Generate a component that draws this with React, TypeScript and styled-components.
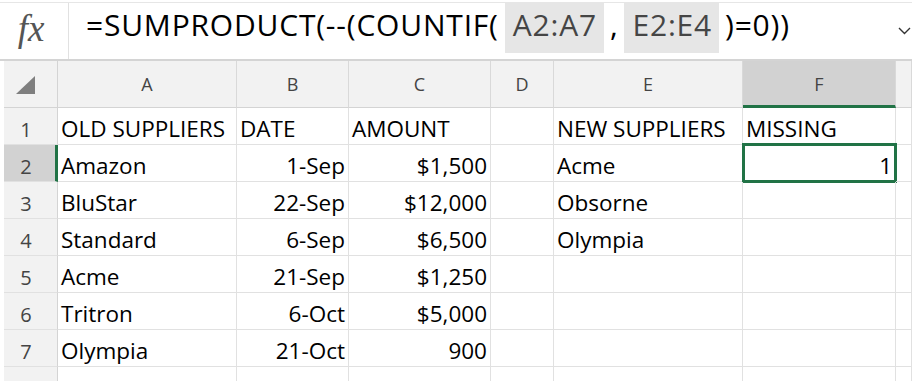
import React from "react";
import styled, { createGlobalStyle } from "styled-components";

const GlobalStyle = createGlobalStyle`
  html, body { margin: 0; padding: 0; background: #ffffff; }
  body { width: 912px; height: 381px; overflow: hidden; }
  * { box-sizing: border-box; }
`;

const Page = styled.div`
  width: 912px;
  height: 381px;
  overflow: hidden;
  background: #ffffff;
`;

const FormulaBar = styled.div`
  margin-top: 2px;
  height: 59px;
  border-top: 1px solid #e6e6e6;
  border-bottom: 2px solid #d4d4d4;
  display: flex;
  align-items: flex-start;
`;

const FxBox = styled.div`
  width: 69px;
  height: 100%;
  border-right: 1px solid #e1e1e1;
  display: flex;
  align-items: center;
  justify-content: center;
  padding-right: 6px;
  padding-bottom: 6px;
  font-family: "Liberation Serif", "DejaVu Serif", serif;
  font-style: italic;
  font-size: 37px;
  color: #555555;
  letter-spacing: 0px;
`;

const FormulaText = styled.div`
  padding-left: 17px;
  font-family: "Open Sans", "Noto Sans", sans-serif;
  font-size: 30px;
  line-height: 44px;
  letter-spacing: 0.8px;
  color: #000000;
  white-space: nowrap;
`;

const Ref = styled.span`
  display: inline-block;
  vertical-align: top;
  background: #e6e6e6;
  color: #454545;
  padding: 0 7px 6px 8px;
  margin: 0 6px;
`;

const Chevron = styled.div`
  margin-left: auto;
  padding-top: 18px;
  width: 14px;
`;

const Sheet = styled.div`
  margin-left: 4px;
  display: grid;
  grid-template-columns: 54px 179px 112px 142px 63px 189px 153px 1fr;
  grid-template-rows: 47px;
  grid-auto-rows: 37px;
`;

const Corner = styled.div`
  background: #f2f2f2;
  border-right: 1px solid #d4d4d4;
  border-bottom: 1px solid #d4d4d4;
  display: flex;
  align-items: center;
  padding-left: 12px;
  padding-top: 1px;
`;

const ColHead = styled.div<{ $sel?: boolean }>`
  background: ${(p) => (p.$sel ? "#d2d2d2" : "#f2f2f2")};
  border-right: 1px solid #d9d9d9;
  border-bottom: ${(p) => (p.$sel ? "3px solid #217346" : "1px solid #d4d4d4")};
  display: flex;
  align-items: center;
  justify-content: center;
  padding-top: ${(p) => (p.$sel ? "2px" : "0")};
  font-family: "Open Sans", "Noto Sans", sans-serif;
  font-size: 18px;
  color: #444444;
`;

const RowHead = styled.div<{ $sel?: boolean }>`
  background: ${(p) => (p.$sel ? "#d2d2d2" : "#f2f2f2")};
  border-right: ${(p) => (p.$sel ? "3px solid #217346" : "1px solid #d4d4d4")};
  border-bottom: 1px solid #e1e1e1;
  text-align: center;
  padding: 7px ${(p) => (p.$sel ? "7px" : "9px")} 0 0;
  font-family: "Open Sans", "Noto Sans", sans-serif;
  font-size: 20px;
  line-height: 29px;
  color: #444444;
`;

const Cell = styled.div<{ $right?: boolean }>`
  position: relative;
  border-right: 1px solid #e1e1e1;
  border-bottom: 1px solid #e1e1e1;
  padding: 6px 3px 0 3px;
  text-align: ${(p) => (p.$right ? "right" : "left")};
  font-family: "Open Sans", "Noto Sans", sans-serif;
  font-size: 22.5px;
  line-height: 30px;
  color: #000000;
  white-space: nowrap;
`;

const Selection = styled.div`
  position: absolute;
  top: -2px;
  left: -1px;
  right: -2px;
  bottom: -2px;
  border: 3px solid #217346;
  pointer-events: none;
`;

type C = { t: string; r?: boolean };

const cols = ["A", "B", "C", "D", "E", "F", ""];

const rows: C[][] = [
  [{ t: "OLD SUPPLIERS" }, { t: "DATE" }, { t: "AMOUNT" }, { t: "" }, { t: "NEW SUPPLIERS" }, { t: "MISSING" }, { t: "" }],
  [{ t: "Amazon" }, { t: "1-Sep", r: true }, { t: "$1,500", r: true }, { t: "" }, { t: "Acme" }, { t: "1", r: true }, { t: "" }],
  [{ t: "BluStar" }, { t: "22-Sep", r: true }, { t: "$12,000", r: true }, { t: "" }, { t: "Obsorne" }, { t: "" }, { t: "" }],
  [{ t: "Standard" }, { t: "6-Sep", r: true }, { t: "$6,500", r: true }, { t: "" }, { t: "Olympia" }, { t: "" }, { t: "" }],
  [{ t: "Acme" }, { t: "21-Sep", r: true }, { t: "$1,250", r: true }, { t: "" }, { t: "" }, { t: "" }, { t: "" }],
  [{ t: "Tritron" }, { t: "6-Oct", r: true }, { t: "$5,000", r: true }, { t: "" }, { t: "" }, { t: "" }, { t: "" }],
  [{ t: "Olympia" }, { t: "21-Oct", r: true }, { t: "900", r: true }, { t: "" }, { t: "" }, { t: "" }, { t: "" }],
  [{ t: "" }, { t: "" }, { t: "" }, { t: "" }, { t: "" }, { t: "" }, { t: "" }],
];

export default function App() {
  return (
    <Page>
      <GlobalStyle />
      <FormulaBar>
        <FxBox>fx</FxBox>
        <FormulaText>
          =SUMPRODUCT(--(COUNTIF(<Ref>A2:A7</Ref>,<Ref>E2:E4</Ref>)=0))
        </FormulaText>
        <Chevron>
          <svg width="13" height="8" viewBox="0 0 13 8">
            <polyline points="1,1 6.5,6.5 12,1" fill="none" stroke="#333" strokeWidth="1.4" />
          </svg>
        </Chevron>
      </FormulaBar>
      <Sheet>
        <Corner>
          <svg width="19" height="18" viewBox="0 0 19 18">
            <polygon points="19,0 19,18 0,18" fill="#7f7f7f" />
          </svg>
        </Corner>
        {cols.map((c, i) => (
          <ColHead key={i} $sel={c === "F"}>
            {c}
          </ColHead>
        ))}
        {rows.map((row, ri) => (
          <React.Fragment key={ri}>
            <RowHead $sel={ri === 1}>{ri + 1}</RowHead>
            {row.map((cell, ci) => (
              <Cell key={ci} $right={cell.r}>
                {cell.t}
                {ri === 1 && ci === 5 && <Selection />}
              </Cell>
            ))}
          </React.Fragment>
        ))}
      </Sheet>
    </Page>
  );
}
